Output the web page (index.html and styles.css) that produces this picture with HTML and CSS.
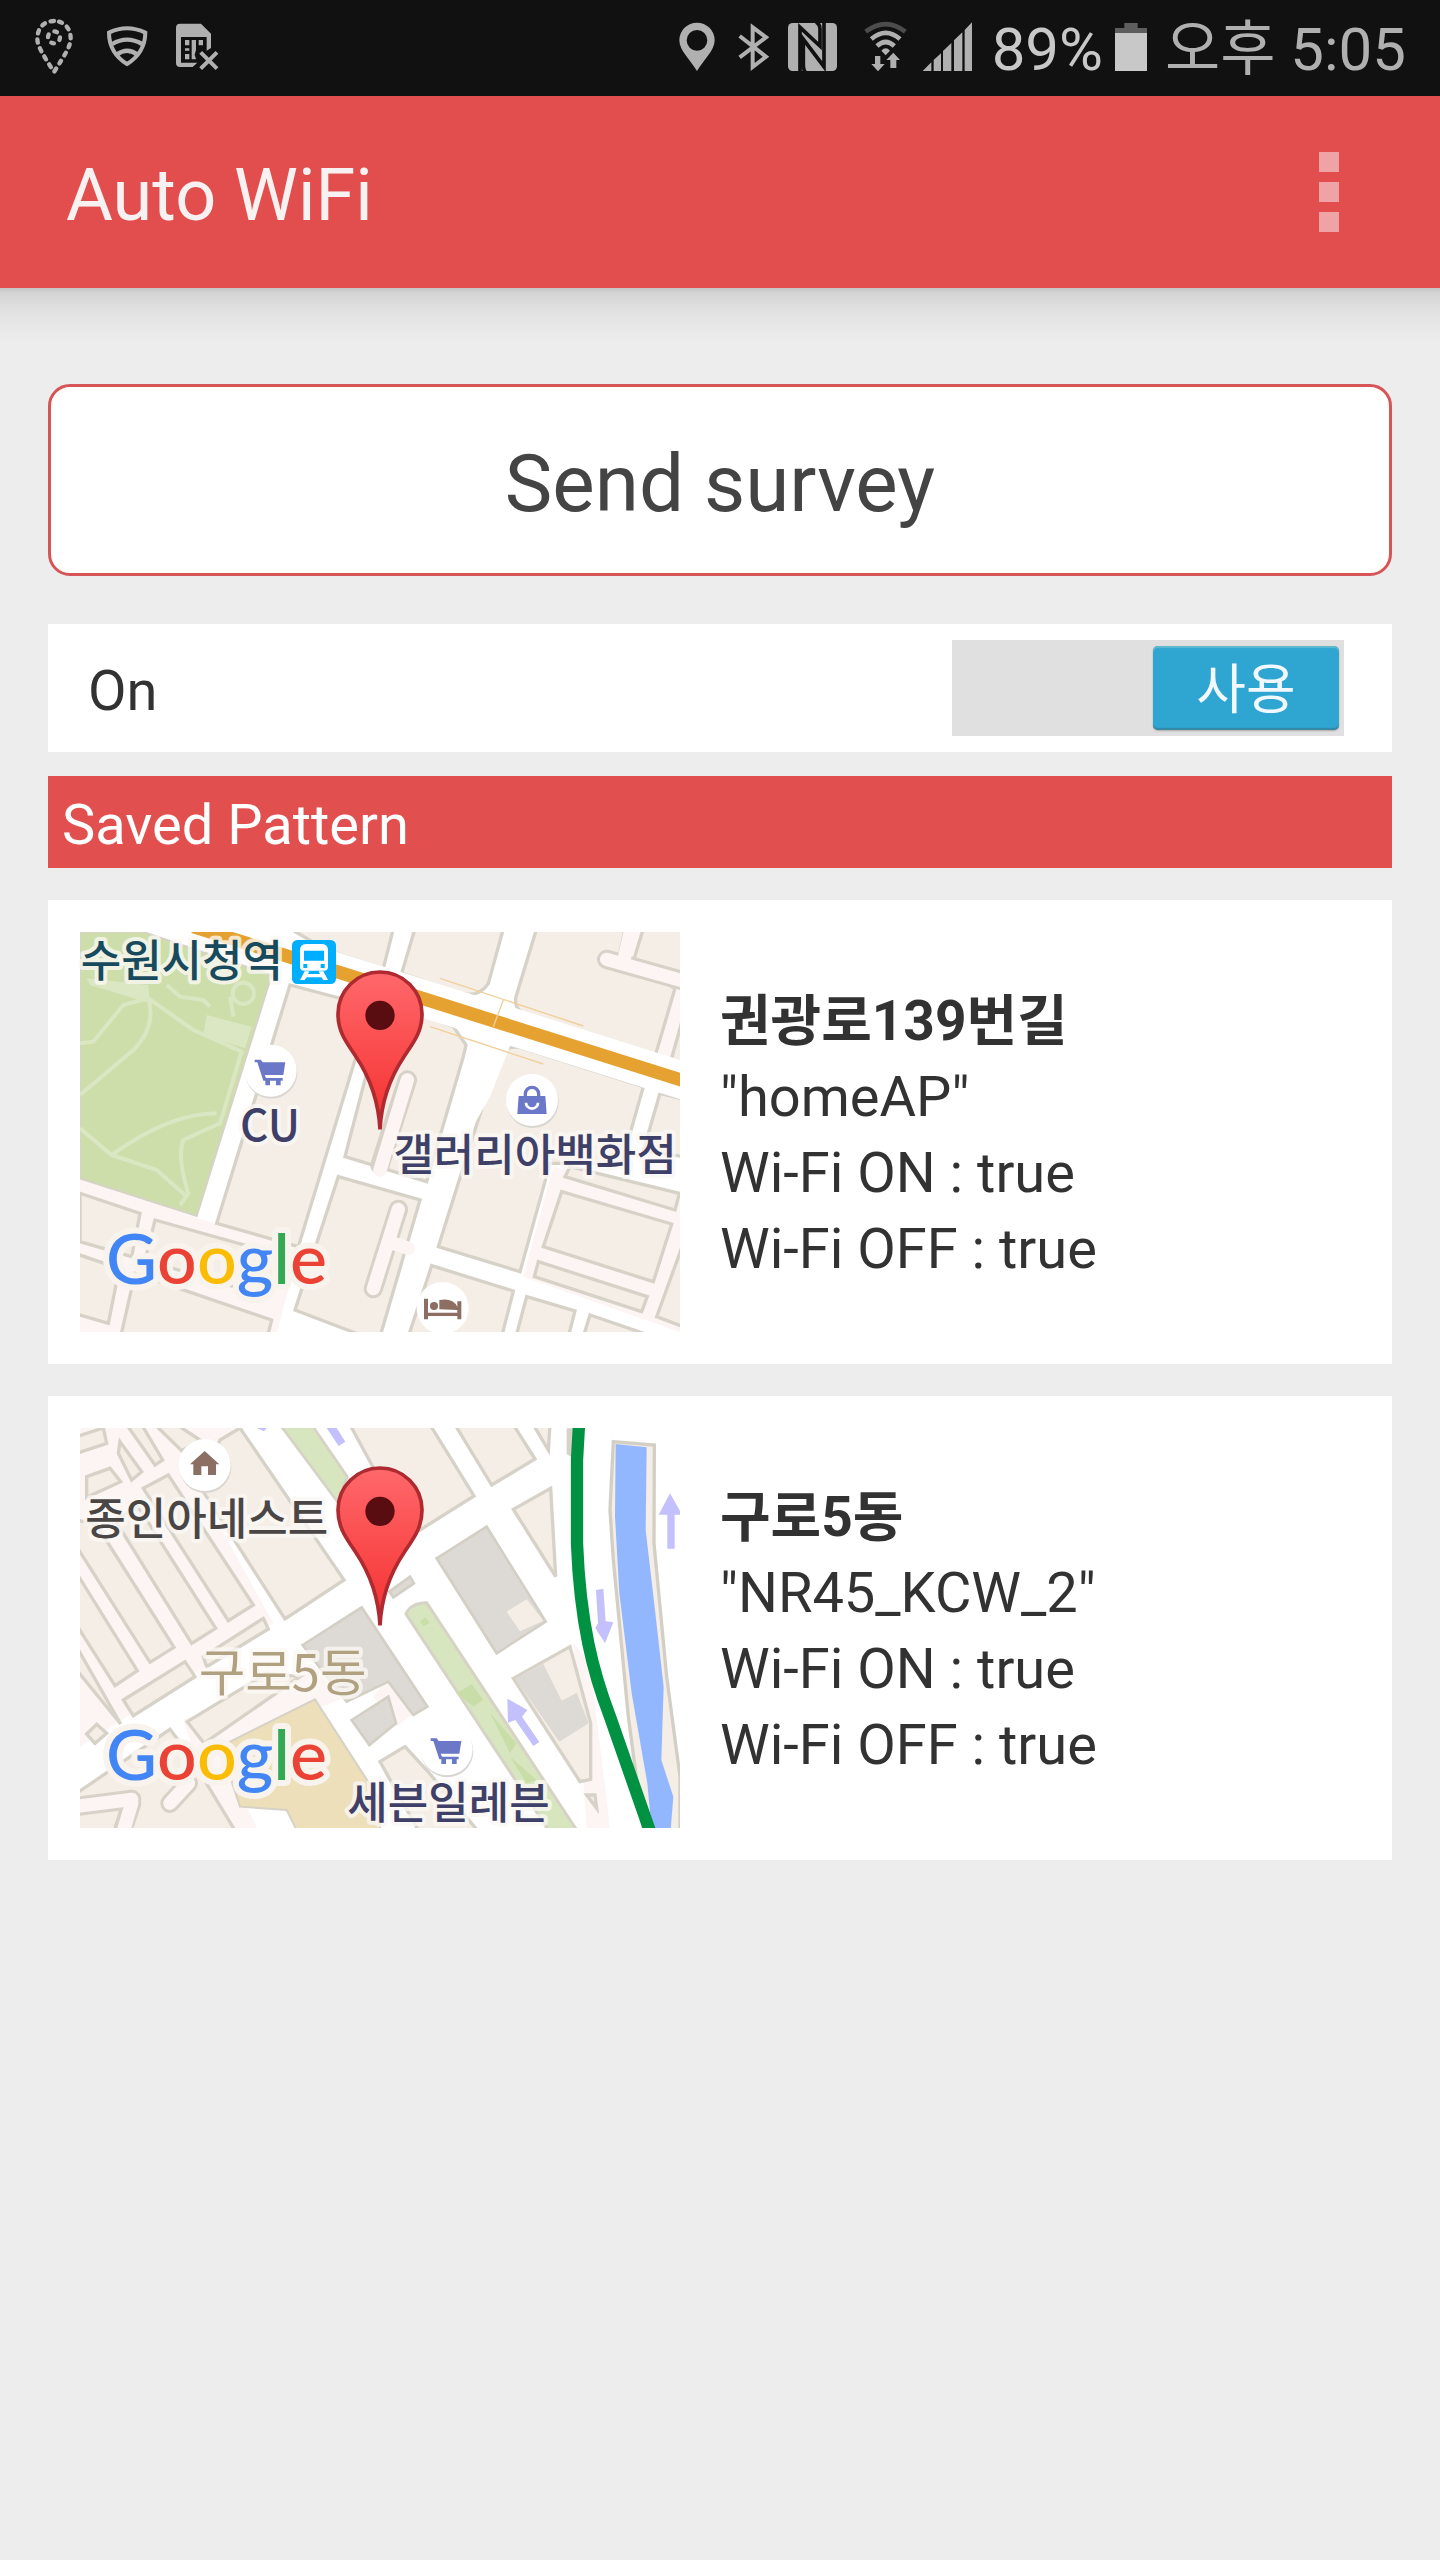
FILE: index.html
```html
<!DOCTYPE html>
<html lang="ko">
<head>
<meta charset="utf-8">
<meta name="viewport" content="width=device-width, initial-scale=1">
<title>Auto WiFi</title>
<link rel="stylesheet" href="styles.css">
</head>
<body>
<svg class="defs" aria-hidden="true">
  <defs>
    <linearGradient id="pin-fill" x1="0" y1="0" x2="0" y2="1">
      <stop offset="0" stop-color="#ff686b"/>
      <stop offset="1" stop-color="#f5302f"/>
    </linearGradient>
    <clipPath id="frame-a"><rect x="60" y="66" width="1800" height="1200"/></clipPath>
    <clipPath id="frame-b"><rect x="60" y="54" width="1800" height="1200"/></clipPath>
    <g id="pin">
      <path d="M960 658C955 562 925 495 888 440C858 395 834 365 834 312A126 126 0 0 1 1086 312C1086 365 1062 395 1032 440C995 495 965 562 960 658Z" fill="url(#pin-fill)" stroke="#ae2a30" stroke-width="11"/>
      <circle cx="960" cy="316" r="44" fill="#5a0d10"/>
    </g>
    <g id="cart">
      <circle cx="2" cy="6" r="78" fill="#d9d6d2"/>
      <circle r="78" fill="#fff"/>
      <path d="M-48-33h18l6 8h68l-6 38h-56l4 9h50v8h-58l-18-55h-8zM-16 30h14v14h-14zM16 30h14v14h-14z" fill="#6b78c8"/>
    </g>
  </defs>
</svg>

<header class="top">
  <div class="status">
    <div class="notices">
      <svg class="notice" viewBox="54 0 216 288" role="img" aria-label="Location request">
        <g class="line dashed"><path d="M162 63C132 63 112 84 112 116C112 140 132 168 162 216C192 168 212 140 212 116C212 84 192 63 162 63Z"/><circle class="ring" cx="162" cy="112" r="18"/></g>
      </svg>
      <svg class="notice" viewBox="269 0 216 288" role="img" aria-label="Secure Wi-Fi">
        <g class="line"><path d="M326 98Q380 72 435 98Q434 158 380 192Q326 158 326 98Z"/><path d="M336 132Q380 106 425 132M349 164Q380 140 412 164" stroke-width="13"/></g>
      </svg>
      <svg class="notice" viewBox="486 0 216 288" role="img" aria-label="No SIM card">
        <path class="ink" fill-rule="evenodd" d="M540 71H603L633 101V144L620 152V111H543V188H592L578 201H540Q528 201 528 189V83Q528 71 540 71Z"/>
        <path class="ink" d="M555 120h13v16h-13zM575 120h13v30l-4 14 4 14h-13zM596 120h13v16h-13zM555 145h13v7h-13zM555 162h13v16h-13z"/>
        <path class="line" d="M602 157L651 206M651 157L602 206"/>
      </svg>
    </div>
    <div class="signals">
      <svg class="cell" viewBox="84 0 174 288" role="img" aria-label="Location"><path class="ink" fill-rule="evenodd" d="M171 213C150 178 118 152 118 121A53 53 0 0 1 224 121C224 152 192 178 171 213ZM171 90A31 31 0 1 0 171 152A31 31 0 1 0 171 90Z"/></svg>
      <svg class="cell" viewBox="258 0 174 288" role="img" aria-label="Bluetooth"><path class="line" d="M299 108L378 170L338 201V82L378 112L299 172"/></svg>
      <svg class="cell" viewBox="432 0 174 288" role="img" aria-label="NFC"><rect class="ink" x="444" y="69" width="147" height="144" rx="14"/><path class="gap" d="M480 216V82L540 138V88Q540 72 528 66M496 216Q490 210 490 192V118L552 200V66"/></svg>
      <svg class="cell cell-wifi" viewBox="606 0 210 288" role="img" aria-label="Wi-Fi">
        <path class="arc faint" d="M677 95Q737 50 796 95"/><path class="arc" d="M694 117Q737 80 780 117M711 138Q737 114 763 138"/>
        <path class="ink" d="M724 152Q737 138 750 152L737 166ZM705 168h16v24h13l-20 22-20-22h11zM751 204v-24h-12l21-22 20 22h-11v24z"/>
      </svg>
      <svg class="cell cell-bars" viewBox="816 0 192 288" role="img" aria-label="Signal strength"><path class="ink" d="M848 213L874 187V213ZM881 180L903 160V213H881ZM909 153L934 129V213H909ZM942 121L967 97V213H942ZM974 90L996 67V213H974Z"/></svg>
      <span class="charge">89%</span>
      <svg class="battery" viewBox="288 0 96 288" role="img" aria-label="Battery"><path fill="#5e5e5e" d="M316 69h40v15h28v15h-96V84h28z"/><path fill="#c8c8c8" d="M288 99h96v114h-96z"/></svg>
      <time class="clock">오후 5:05</time>
    </div>
  </div>
  <div class="bar">
    <h1 class="title">Auto WiFi</h1>
    <button class="more" type="button" aria-label="More options"><i class="dot"></i><i class="dot"></i><i class="dot"></i></button>
  </div>
</header>

<main class="page">
  <button class="survey" type="button">Send survey</button>

  <section class="toggle">
    <label class="toggle-label" for="wifi-auto">On</label>
    <div class="switch">
      <input class="switch-input" id="wifi-auto" type="checkbox" checked>
      <span class="switch-thumb">사용</span>
    </div>
  </section>

  <h2 class="heading">Saved Pattern</h2>

  <div class="patterns">
    <article class="card">
      <svg class="map" viewBox="60 66 1800 1200" role="img" aria-label="수원시청역">
        <g clip-path="url(#frame-a)">
        <rect x="60" y="66" width="1800" height="1200" fill="#fff"/>
        <path class="lane" d="M60 805L430 930L720 1010L650 1270H60ZM1480 770L1870 860V1270L1390 1100ZM1695 60H1870V480L1790 450L1840 240L1670 140Z"/>
        <path class="park" d="M60 66H250L635 195L410 918L60 805Z"/>
        <g class="trail">
          <path d="M60 400L100 395L190 285L265 265L400 360L545 425L480 640L370 690Q350 740 385 850L360 885"/>
          <path d="M265 265Q290 350 220 420L60 555M60 655L155 735L290 780L375 855M155 735Q330 610 470 610M320 225L360 260L430 270L450 290M520 320L510 260"/>
          <circle cx="550" cy="250" r="32"/>
        </g>
        <path fill="#dbe6c3" d="M80 205L265 225L270 280L90 225ZM440 315L575 350L555 415L430 375Z"/>
        <g class="block">
          <path d="M60 850L240 910L215 1040L60 995Z"/>
          <path d="M285 930L660 1035L622 1160L255 1050Z"/>
          <path d="M50 1032L178 1075L145 1240L50 1212Z"/>
          <path d="M225 1090L635 1230L620 1290H180Z"/>
          <path d="M690 225L935 290L885 450L715 1010L470 940Z"/>
          <path d="M960 300L1100 320L1180 350L1218 405L1210 440L1100 815L855 740L925 470Z"/>
          <path d="M835 800L1080 870L960 1280H915L705 1200Z"/>
          <path d="M690 56H1000L970 175L800 120Z"/>
          <path d="M1065 56H1330L1285 220Q1260 260 1210 252L1025 190Z"/>
          <path d="M1430 56H1695L1678 140L1845 235L1785 440L1400 315Q1360 300 1368 260Z"/>
          <path d="M1750 56H1870V188L1722 147Z"/>
          <path d="M1870 320L1832 455L1870 468Z"/>
          <path d="M1308 460Q1320 405 1380 412L1750 530L1685 760L1470 760L1380 1085L1135 1010Z"/>
          <path d="M1530 770L1858 850L1845 900L1515 800Z"/>
          <path d="M1505 845L1835 942L1780 1115L1450 1010Z"/>
          <path d="M1435 1055L1762 1160L1745 1205L1423 1100Z"/>
          <path d="M1870 1000L1790 1220L1870 1250ZM1800 550L1870 567V740L1750 722Z"/>
          <path d="M1115 1067L1360 1143L1325 1280H1045ZM1400 1160L1545 1203L1525 1280H1368ZM1590 1215L1780 1280H1570Z"/>
        </g>
        <path class="alley-edge" d="M1042 510L960 765M1015 898L940 1136M1640 148L1870 213"/>
        <path class="alley" d="M1042 510L960 780M1015 898L940 1136M1000 1000L1045 1015M1640 148L1870 213M1712 60L1692 150"/>
        <path d="M400 50L1090 266L1870 512" fill="none" stroke="#fff" stroke-width="112" stroke-linecap="round"/>
        <path d="M1350 56H1410L1345 270L1365 370L1290 560L1210 700L1180 690L1230 480L1270 330Z" fill="#fff"/>
        <path d="M400 50L1090 266L1870 512" fill="none" stroke="#e6a230" stroke-width="40"/>
        <path d="M1140 205L1570 348M1110 350L1450 462M1330 270L1300 350" fill="none" stroke="#f1cf9a" stroke-width="4"/>
        </g>
        <use href="#cart" x="632" y="482"/>
        <g transform="translate(1416 570)">
          <circle cx="2" cy="6" r="78" fill="#d9d6d2"/><circle r="78" fill="#fff"/>
          <path d="M-40-12h80l4 54h-88z" fill="#6b78c8"/><path d="M-20-10v-8a20 20 0 0 1 40 0v8" fill="none" stroke="#6b78c8" stroke-width="10"/><path d="M-18 8a18 18 0 0 0 36 0" fill="none" stroke="#fff" stroke-width="8"/>
        </g>
        <g clip-path="url(#frame-a)"><g transform="translate(1148 1194)">
          <circle r="78" fill="#fff"/>
          <path d="M-56-28h12v42h88v-8l-54-2v-28q40-8 54 20v-16h12v54h-12v-10h-88v10h-12z" fill="#8d6e63"/><circle cx="-26" cy="-6" r="12" fill="#8d6e63"/>
        </g></g>
        <g transform="translate(696 90)">
          <rect width="132" height="132" rx="16" fill="#00aeff"/>
          <path fill="#fff" fill-rule="evenodd" d="M42 12H90Q108 12 108 32V80Q108 92 96 92H36Q24 92 24 80V32Q24 12 42 12ZM36 32V62H96V32ZM34 72V84H46V72ZM86 72V84H98V72ZM38 94H52L48 102H84L80 94H94L108 120H94L88 112H44L38 120H24Z"/>
        </g>
        <text class="place station" x="62" y="201">수원시청역</text>
        <text class="place shop" x="540" y="693">CU</text>
        <text class="place shop" x="1000" y="783">갤러리아백화점</text>
        <text class="brand" x="138" y="1123"><tspan class="g-blue">G</tspan><tspan class="g-red">o</tspan><tspan class="g-yellow">o</tspan><tspan class="g-blue">g</tspan><tspan class="g-green">l</tspan><tspan class="g-red">e</tspan></text>
        <use href="#pin"/>
      </svg>
      <div class="info">
        <h3 class="name">권광로139번길</h3>
        <p class="detail">"homeAP"</p>
        <p class="detail">Wi-Fi ON : true</p>
        <p class="detail">Wi-Fi OFF : true</p>
      </div>
    </article>

    <article class="card">
      <svg class="map" viewBox="60 54 1800 1200" role="img" aria-label="구로5동">
        <g clip-path="url(#frame-b)">
        <rect x="60" y="54" width="1800" height="1200" fill="#fff"/>
        <path class="lane" d="M60 54H520L420 240L640 640L60 1010ZM370 930L760 780L860 860L480 1010L590 1254H480ZM1000 780L1060 910L1010 950L940 860ZM1540 700L1590 760L1650 1254H1580Z"/>
        <g class="block">
          <path d="M540 54L852 510L675 627L420 230L480 90Z"/>
          <path d="M250 235L325 195L580 585L505 632Z"/>
          <path d="M165 330L235 290L467 655L395 700Z"/>
          <path d="M50 410V330L110 345L342 712L270 757Z"/>
          <path d="M50 490L232 782L165 827L50 645Z"/>
          <path d="M50 710L182 942L50 780Z"/>
          <path d="M190 870L375 755L405 800L220 917Z"/>
          <path d="M430 740L610 625L625 657L440 770Z"/>
          <path d="M80 972L110 943L140 970L105 1000Z"/>
          <path d="M180 95L245 185L215 210L175 130ZM200 44H245L308 150L285 165ZM285 44H350L420 90L365 122ZM50 80L130 54L140 100L50 130ZM80 200L150 175L182 215L80 262Z"/>
          <path d="M382 935L620 790L720 800L432 1000Z"/>
          <path d="M50 1150L330 958L385 1030L530 1270H50Z"/>
          <path d="M870 44H1110L1242 258L1080 360L960 210Z"/>
          <path d="M1185 44H1360L1425 147L1295 225ZM1420 44H1470L1465 120Z"/>
          <path d="M1360 298L1472 235L1487 500Z"/>
          <path d="M960 1055L1035 1010L1100 1080L1260 1270H1080Z"/>
          <path d="M1360 805L1530 710L1592 940V1108L1560 1115ZM1580 1155L1605 1155L1610 1195ZM1525 60V130L1535 135V60Z"/>
        </g>
        <g class="alley-edge"><path d="M60 1188L215 1168M330 1180L385 1120M190 1254L215 1180"/></g>
        <g class="alley"><path d="M60 1188L215 1168M330 1180L385 1120M190 1264L215 1180"/></g>
        <path d="M765 868L960 1170V1260H710L680 1200L540 1190L480 1010Z" fill="#ecdfba" stroke="#d6d2c6" stroke-width="6"/>
        <g class="built">
          <path d="M728 705L905 592L1102 890L1060 915L985 815L860 875L800 800Z"/>
          <path d="M875 930L985 860L1008 940L928 1005Z"/>
          <path d="M1130 445L1280 350L1457 635L1310 730Z"/>
          <path d="M988 545L1050 500L1062 520L1000 562Z"/>
        </g>
        <path fill="#dddad5" d="M1366 806L1450 762L1505 872L1550 848L1586 940L1498 995Z"/>
        <path class="cream" d="M1340 605L1400 568L1450 632L1380 664Z"/>
        <path d="M1038 612Q1050 580 1100 578L1550 1260H1465Z" fill="#d8e6bf" stroke="#d6d2c6" stroke-width="9"/>
        <path fill="#c9dda9" d="M1190 850L1235 822L1270 870L1240 890ZM1290 910L1370 1000L1350 1030ZM1350 1040L1430 1110L1400 1120ZM1080 635L1095 622L1110 638L1090 648Z"/>
        <path d="M660 44H755L862 200L832 275Z" fill="#d8e6bf" stroke="#d6d2c6" stroke-width="8"/>
        <path class="arrow" d="M800 54H830L856 95L836 108ZM590 54H620L612 64Z"/>
        <path d="M1660 95L1783 105L1782 400L1820 800L1860 1100V1260H1750L1705 920L1660 450L1650 300Z" fill="#f5eee6" stroke="#d3cfc4" stroke-width="10"/>
        <path d="M1667 102L1760 112L1757 360L1785 600L1811 830L1804 1050L1840 1160L1832 1260H1775L1762 1120L1715 850L1678 550L1665 320Z" fill="#93b7ff"/>
        <path d="M1557 44L1551 150V400C1560 640 1600 790 1650 920L1770 1264" fill="none" stroke="#009242" stroke-width="37"/>
        <path class="arrow" d="M1830 250L1866 314H1844V416H1822V314H1796ZM1608 540L1630 536L1637 634L1660 637L1635 700L1606 654L1614 640ZM1342 866L1402 900L1386 920L1438 996L1420 1008L1366 930L1344 938Z"/>
        </g>
        <g transform="translate(434 165)"><circle cx="2" cy="6" r="78" fill="#d9d6d2"/><circle r="78" fill="#fff"/><path d="M0-42L44-2H34V30H10V4H-10V30H-34V-2H-44Z" fill="#8d6e63"/></g>
        <use href="#cart" x="1160" y="1018"/>
        <text class="place" x="76" y="375">종인아네스트</text>
        <text class="place area" x="416" y="842">구로5동</text>
        <text class="place shop" x="862" y="1228">세븐일레븐</text>
        <text class="brand" x="138" y="1111"><tspan class="g-blue">G</tspan><tspan class="g-red">o</tspan><tspan class="g-yellow">o</tspan><tspan class="g-blue">g</tspan><tspan class="g-green">l</tspan><tspan class="g-red">e</tspan></text>
        <use href="#pin" y="-12"/>
      </svg>
      <div class="info">
        <h3 class="name">구로5동</h3>
        <p class="detail">"NR45_KCW_2"</p>
        <p class="detail">Wi-Fi ON : true</p>
        <p class="detail">Wi-Fi OFF : true</p>
      </div>
    </article>
  </div>
</main>
</body>
</html>
```
FILE: styles.css
```css
* { box-sizing: border-box; }

body {
  margin: 0;
  min-height: 100vh;
  background: #ededed;
  color: #323232;
  font-family: Roboto, "Noto Sans CJK KR", sans-serif;
  font-size: 56px;
  line-height: 76px;
}

h1, h2, h3, p { margin: 0; font-weight: 400; }
button { font: inherit; cursor: pointer; }

.defs { position: absolute; width: 0; height: 0; }

/* Status bar */
.status {
  display: flex;
  justify-content: space-between;
  height: 96px;
  padding: 0 34px 0 18px;
  background: #111;
  color: #b0b0b0;
  font-size: 60px;
  line-height: 100px;
  white-space: nowrap;
}
.notices, .signals { display: flex; }
.notice { width: 72px; height: 96px; }
.cell { width: 58px; height: 96px; }
.cell-wifi { width: 70px; }
.cell-bars { width: 64px; margin-right: 16px; }
.charge { color: #c8c8c8; }
.battery { width: 32px; height: 96px; margin: 0 18px 0 12px; }

.ink { fill: #b0b0b0; }
.line { fill: none; stroke: #b0b0b0; stroke-width: 12; }
.dashed { stroke-width: 13; stroke-dasharray: 10 18; stroke-linecap: round; }
.ring { stroke-dasharray: 8 20; }
.gap { fill: none; stroke: #111; stroke-width: 11; }
.arc { fill: none; stroke: #b0b0b0; stroke-width: 14; }
.faint { stroke: #4c4c4c; }

/* App bar */
.bar {
  display: flex;
  align-items: center;
  justify-content: space-between;
  height: 192px;
  padding: 0 91px 0 66px;
  background: #e24d4d;
}
.title { padding-top: 8px; color: #f7f1f1; font-size: 72px; line-height: 96px; }
.more {
  display: flex;
  flex-direction: column;
  gap: 10px;
  padding: 10px;
  border: 0;
  background: none;
}
.dot { width: 20px; height: 20px; background: #f0a3a5; }

/* Content */
.page {
  padding: 96px 48px;
  background: linear-gradient(#c4c4c4, #d4d4d4 5px, #e2e2e2 24px, #ededed 54px);
}
.survey {
  width: 100%;
  height: 192px;
  border: 3px solid #d65557;
  border-radius: 22px;
  background: #fff;
  color: #444;
  font-size: 80px;
  padding: 8px 0 0;
}
.toggle {
  display: flex;
  align-items: center;
  justify-content: space-between;
  margin: 48px 0 24px;
  padding: 16px 48px 16px 40px;
  background: #fff;
}
.toggle-label { padding-top: 6px; }
.switch {
  position: relative;
  display: flex;
  justify-content: flex-end;
  width: 392px;
  height: 96px;
  padding: 6px 5px;
  background: #e0e0e0;
}
.switch-input {
  position: absolute;
  inset: 0;
  width: 100%;
  height: 100%;
  margin: 0;
  opacity: 0;
  cursor: pointer;
}
.switch-thumb {
  width: 186px;
  border-radius: 5px;
  background: #2ea6d1;
  box-shadow: inset 0 2px 1px #62b9d2, inset 0 -2px 1px #3688a5, 0 1px 2px #aaa;
  color: #f2f8ff;
  font-size: 54px;
  line-height: 90px;
  text-align: center;
}
.heading {
  padding: 11px 14px 5px;
  background: #e24f4f;
  color: #fff;
  font-size: 56px;
}

.patterns { display: grid; gap: 32px; margin-top: 32px; }
.card {
  display: flex;
  align-items: center;
  gap: 40px;
  padding: 32px;
  background: #fff;
}
.map {
  display: block;
  flex: 0 1 600px;
  min-width: 0;
  aspect-ratio: 3 / 2;
  overflow: visible;
}
.info { padding-top: 6px; }
.name { font-size: 55px; font-weight: 700; height: 76px; }

/* Map drawing */
.lane { fill: #fcf5f4; }
.park { fill: #cddeab; stroke: #d6d2c6; stroke-width: 6; }
.trail { fill: none; stroke: #dbe6c3; stroke-width: 12; }
.block { fill: #f5eee6; stroke: #d6d2c8; stroke-width: 10; }
.cream { fill: #f5eee6; }
.built { fill: #dddad5; stroke: #d3cfc4; stroke-width: 8; }
.alley { fill: none; stroke: #fcf5f4; stroke-width: 40; stroke-linecap: round; }
.alley-edge { fill: none; stroke: #d6d2c8; stroke-width: 58; stroke-linecap: round; }
.arrow { fill: #c3c0fb; }

.place {
  font-family: "Noto Sans CJK KR", sans-serif;
  font-size: 132px;
  font-weight: 500;
  fill: #4a4646;
  stroke: #fbf8f4;
  stroke-opacity: 0.8;
  stroke-width: 24px;
  stroke-linejoin: round;
  paint-order: stroke;
}
.station { fill: #174a5c; }
.shop { fill: #3f4068; }
.area { font-size: 152px; font-weight: 400; fill: #b0a181; }
.brand {
  font-family: Lato, sans-serif;
  font-size: 210px;
  font-weight: 500;
  stroke: #f8f3ec;
  stroke-width: 36px;
  stroke-linejoin: round;
  paint-order: stroke;
}
.g-blue { fill: #4285f4; }
.g-red { fill: #ea4335; }
.g-yellow { fill: #fbbc05; }
.g-green { fill: #34a853; }
```
